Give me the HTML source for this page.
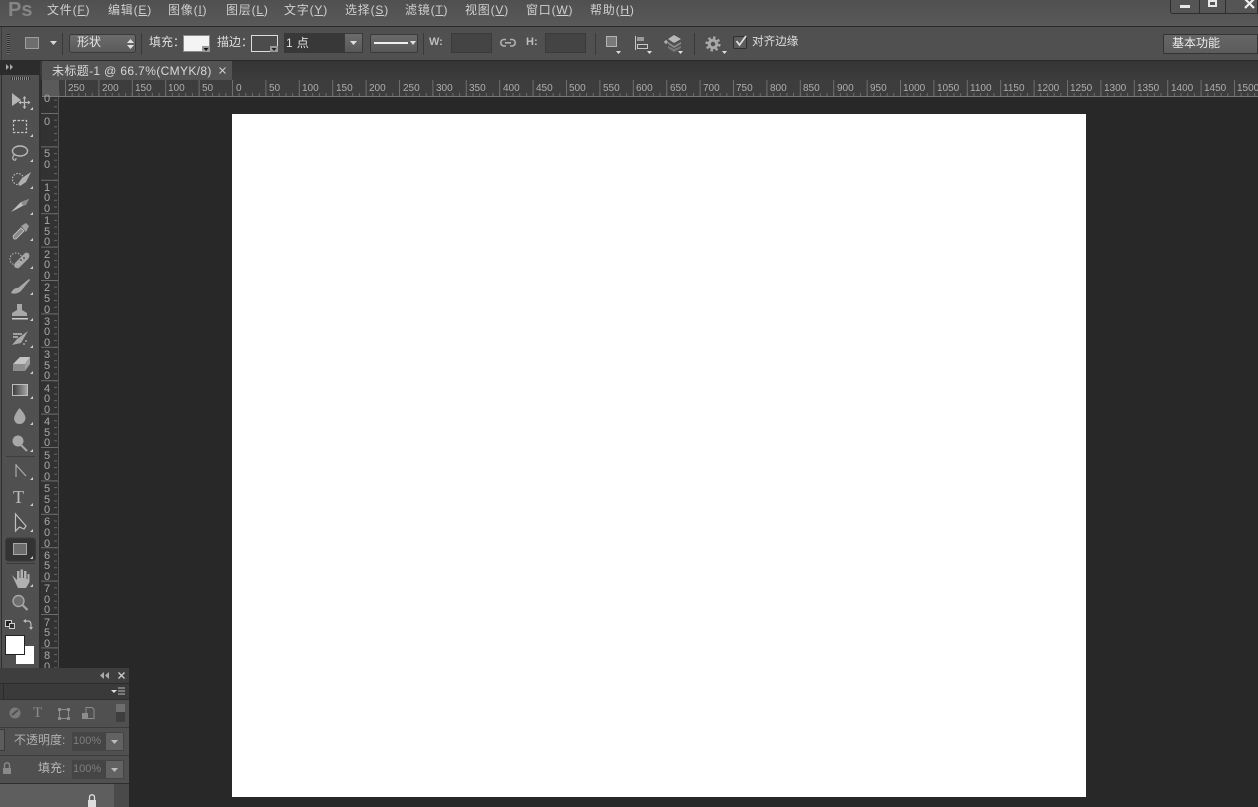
<!DOCTYPE html>
<html><head><meta charset="utf-8"><style>
html,body{margin:0;padding:0;width:1258px;height:807px;overflow:hidden;background:#282828}
body{position:relative;font-family:"Liberation Sans","Noto Sans CJK SC",sans-serif;font-size:12px;color:#d6d6d6}
.a{position:absolute}
.m{position:absolute;top:2px;line-height:16px;font-size:12px;color:#cfcfcf;white-space:nowrap;letter-spacing:.8px}
.m u{text-underline-offset:1px}
.t{position:absolute;white-space:nowrap;line-height:16px}
svg{position:absolute;overflow:visible}
</style></head><body>
<!-- menu bar -->
<div class="a" style="left:0;top:0;width:1258px;height:26px;background:linear-gradient(#505050,#595959)"></div>
<div class="a" style="left:0;top:26px;width:1258px;height:1px;background:#2b2b2b"></div>
<div class="t" style="left:8px;top:0;font-size:20px;line-height:20px;font-weight:bold;color:#858585">Ps</div>
<div class="m" style="left:47px">文件(<u>F</u>)</div>
<div class="m" style="left:108px">编辑(<u>E</u>)</div>
<div class="m" style="left:168px">图像(<u>I</u>)</div>
<div class="m" style="left:226px">图层(<u>L</u>)</div>
<div class="m" style="left:284px">文字(<u>Y</u>)</div>
<div class="m" style="left:345px">选择(<u>S</u>)</div>
<div class="m" style="left:405px">滤镜(<u>T</u>)</div>
<div class="m" style="left:465px">视图(<u>V</u>)</div>
<div class="m" style="left:526px">窗口(<u>W</u>)</div>
<div class="m" style="left:590px">帮助(<u>H</u>)</div>
<!-- window controls -->
<div class="a" style="left:1170px;top:-1px;width:88px;height:15px;background:#555;border:1px solid #2e2e2e;border-radius:0 0 0 3px;box-sizing:border-box"></div>
<div class="a" style="left:1199px;top:0;width:1px;height:13px;background:#2e2e2e"></div>
<div class="a" style="left:1225px;top:0;width:1px;height:13px;background:#2e2e2e"></div>
<div class="a" style="left:1180px;top:5px;width:10px;height:3px;background:#e8e8e8"></div>
<div class="a" style="left:1208px;top:0;width:9px;height:7px;border:2px solid #e8e8e8;box-sizing:border-box"></div>
<svg style="left:1244px;top:0" width="14" height="10"><path d="M1 -1L10 8M10 -1L1 8" stroke="#eee" stroke-width="2.2" fill="none"/></svg>
<!-- options bar -->
<div class="a" style="left:0;top:27px;width:1258px;height:33px;background:#505050"></div>
<div class="a" style="left:0;top:60px;width:1258px;height:1px;background:#2a2a2a"></div>
<div class="a" style="left:1px;top:27px;width:1px;height:33px;background:#3c3c3c"></div>
<div class="a" style="left:7px;top:34px;width:3px;height:20px;background:repeating-linear-gradient(#2f2f2f 0 1px,#6a6a6a 1px 2px)"></div>
<div class="a" style="left:25px;top:37px;width:12px;height:10px;background:#6e6e6e;border:1px solid #9e9e9e"></div>
<svg style="left:50px;top:41px" width="7" height="4"><path d="M0 0H7L3.500 4Z" fill="#d8d8d8"/></svg>
<div class="a" style="left:62px;top:33px;width:1px;height:22px;background:#3a3a3a"></div>
<div class="a" style="left:69px;top:34px;width:67px;height:19px;background:linear-gradient(#6c6c6c,#5a5a5a);border:1px solid #3a3a3a;border-radius:3px;box-sizing:border-box"></div>
<div class="t" style="left:77px;top:34px;color:#e4e4e4">形状</div>
<svg style="left:127px;top:39px" width="7" height="10"><path d="M0 4L3.500 0L7 4ZM0 6L3.500 10L7 6Z" fill="#e0e0e0"/></svg>
<div class="a" style="left:141px;top:33px;width:1px;height:22px;background:#3a3a3a"></div>
<div class="t" style="left:149px;top:34px;color:#dedede">填充：</div>
<div class="a" style="left:183px;top:35px;width:27px;height:17px;background:#f4f4f4;border:1px solid #8c8c8c;box-sizing:border-box"></div>
<svg style="left:202px;top:46px" width="8" height="6"><path d="M0 0H8V6H0Z" fill="#999"/><path d="M1.500 2H6.500L4 5Z" fill="#111"/></svg>
<div class="t" style="left:217px;top:34px;color:#dedede">描边：</div>
<div class="a" style="left:251px;top:35px;width:27px;height:17px;background:#4c4c4c;border:1px solid #dcdcdc;box-sizing:border-box"></div>
<svg style="left:270px;top:46px" width="8" height="6"><path d="M0 0H8V6H0Z" fill="#9a9a9a"/><path d="M1.500 2H6.500L4 5Z" fill="#222"/></svg>
<div class="a" style="left:284px;top:33px;width:60px;height:20px;background:#383838"></div>
<div class="t" style="left:286px;top:35px;color:#e0e0e0;letter-spacing:.4px">1 点</div>
<div class="a" style="left:344px;top:33px;width:19px;height:20px;background:linear-gradient(#6c6c6c,#585858);border:1px solid #3a3a3a;box-sizing:border-box"></div>
<svg style="left:350px;top:41px" width="7" height="4"><path d="M0 0H7L3.500 4Z" fill="#e0e0e0"/></svg>
<div class="a" style="left:370px;top:34px;width:48px;height:19px;background:linear-gradient(#6a6a6a,#585858);border:1px solid #3a3a3a;border-radius:2px;box-sizing:border-box"></div>
<div class="a" style="left:374px;top:42px;width:34px;height:2px;background:#f0f0f0"></div>
<svg style="left:410px;top:41px" width="6" height="4"><path d="M0 0H6L3 4Z" fill="#e0e0e0"/></svg>
<div class="a" style="left:423px;top:33px;width:1px;height:22px;background:#3a3a3a"></div>
<div class="t" style="left:429px;top:34px;font-size:11px;font-weight:bold;color:#bdbdbd">W:</div>
<div class="a" style="left:451px;top:33px;width:41px;height:20px;background:#444;border:1px solid #3a3a3a;box-sizing:border-box"></div>
<svg style="left:500px;top:38px" width="16" height="10"><path d="M6 1.500H4A3.200 3.200 0 0 0 4 8H6M10 1.500H12A3.200 3.200 0 0 1 12 8H10M5 4.800H11" stroke="#b0b0b0" stroke-width="1.600" fill="none"/></svg>
<div class="t" style="left:526px;top:34px;font-size:11px;font-weight:bold;color:#bdbdbd">H:</div>
<div class="a" style="left:545px;top:33px;width:41px;height:20px;background:#444;border:1px solid #3a3a3a;box-sizing:border-box"></div>
<div class="a" style="left:595px;top:33px;width:1px;height:22px;background:#3a3a3a"></div>
<div class="a" style="left:606px;top:36px;width:9px;height:9px;background:#7a7a7a;border:1px solid #b4b4b4"></div>
<svg style="left:616px;top:51px" width="5" height="3"><path d="M0 0H5L2.500 3Z" fill="#ddd"/></svg>
<svg style="left:635px;top:36px" width="16" height="14"><path d="M.5 0V14" stroke="#c8c8c8"/><rect x="2" y="1" width="7" height="4" fill="#9a9a9a"/><rect x="2.500" y="8.500" width="10" height="4" fill="none" stroke="#c8c8c8"/></svg>
<svg style="left:647px;top:51px" width="5" height="3"><path d="M0 0H5L2.500 3Z" fill="#ddd"/></svg>
<svg style="left:663px;top:35px" width="20" height="17"><path d="M1 7H5M3 5V9" stroke="#ccc"/><path d="M11 0L18 4L11 8L5 4Z" fill="#b8b8b8"/><path d="M5 7L11 11L18 7V9L11 13L5 9Z" fill="#8c8c8c"/><path d="M5 11L11 14L18 11V13L11 17L5 13Z" fill="#777"/></svg>
<svg style="left:678px;top:51px" width="5" height="3"><path d="M0 0H5L2.500 3Z" fill="#ddd"/></svg>
<div class="a" style="left:694px;top:33px;width:1px;height:22px;background:#3a3a3a"></div>
<svg style="left:705px;top:36px" width="16" height="16" viewBox="0 0 16 16"><circle cx="8" cy="8" r="3.800" fill="none" stroke="#a8a8a8" stroke-width="3"/><circle cx="8" cy="8" r="6.400" fill="none" stroke="#a8a8a8" stroke-width="2.400" stroke-dasharray="2.500 2.500"/></svg>
<svg style="left:722px;top:51px" width="5" height="3"><path d="M0 0H5L2.500 3Z" fill="#ddd"/></svg>
<div class="a" style="left:733px;top:36px;width:14px;height:13px;background:#5c5c5c;border:1px solid #2f2f2f;border-radius:2px;box-sizing:border-box"></div>
<svg style="left:735px;top:35px" width="13" height="12"><path d="M1.500 6L4.500 10L11 1" stroke="#e2e2e2" stroke-width="1.700" fill="none"/></svg>
<div class="t" style="left:752px;top:34px;color:#dedede;font-size:11.600px">对齐边缘</div>
<div class="a" style="left:1163px;top:34px;width:95px;height:20px;background:linear-gradient(#666,#5c5c5c);border:1px solid #333;border-radius:2px 0 0 2px;box-sizing:border-box"></div>
<div class="t" style="left:1172px;top:35px;color:#ececec">基本功能</div>
<!-- tab row -->
<div class="a" style="left:0;top:61px;width:1258px;height:19px;background:linear-gradient(#353535,#3c3c3c)"></div>
<div class="a" style="left:42px;top:61px;width:190px;height:19px;background:#535353"></div>
<div class="t" style="left:52px;top:63px;color:#d8d8d8;letter-spacing:.36px">未标题-1 @ 66.7%(CMYK/8)</div>
<svg style="left:219px;top:67px" width="7" height="7"><path d="M.5 .5L6.500 6.500M6.500 .5L.5 6.500" stroke="#ccc" stroke-width="1.100"/></svg>
<!-- canvas area -->
<div class="a" style="left:59px;top:97px;width:1199px;height:710px;background:#282828"></div>
<div class="a" style="left:232px;top:114px;width:854px;height:683px;background:#fff"></div>
<!-- h ruler -->
<svg style="left:42px;top:80px" width="1216" height="17">
<defs><pattern id="hp" width="6.680" height="17" patternUnits="userSpaceOnUse" x="190"><rect x="0" y="13" width="1" height="3" fill="#6c6c6c"/></pattern>
<pattern id="hb" width="33.400" height="17" patternUnits="userSpaceOnUse" x="190"><rect x="0" y="0" width="1" height="16" fill="#6e6e6e"/></pattern></defs>
<rect width="1216" height="17" fill="#3d3d3d"/>
<rect x="17" width="1199" height="16" fill="url(#hp)"/><rect x="17" width="1199" height="16" fill="url(#hb)"/>
<rect x="0" width="17" height="17" fill="#5a5a5a"/>
<rect y="16" width="1216" height="1" fill="#767676"/>
<g font-family="Liberation Sans,sans-serif" font-size="10" fill="#aeaeae">
<text x="26" y="11">250</text><text x="60" y="11">200</text><text x="93" y="11">150</text><text x="126" y="11">100</text><text x="160" y="11">50</text><text x="194" y="11">0</text><text x="227" y="11">50</text><text x="260" y="11">100</text><text x="294" y="11">150</text><text x="327" y="11">200</text><text x="361" y="11">250</text><text x="394" y="11">300</text><text x="427" y="11">350</text><text x="461" y="11">400</text><text x="494" y="11">450</text><text x="527" y="11">500</text><text x="561" y="11">550</text><text x="594" y="11">600</text><text x="628" y="11">650</text><text x="661" y="11">700</text><text x="694" y="11">750</text><text x="728" y="11">800</text><text x="761" y="11">850</text><text x="795" y="11">900</text><text x="828" y="11">950</text><text x="861" y="11">1000</text><text x="895" y="11">1050</text><text x="928" y="11">1100</text><text x="961" y="11">1150</text><text x="995" y="11">1200</text><text x="1028" y="11">1250</text><text x="1062" y="11">1300</text><text x="1095" y="11">1350</text><text x="1129" y="11">1400</text><text x="1162" y="11">1450</text><text x="1195" y="11">1500</text>
</g></svg>
<!-- v ruler -->
<svg style="left:41px;top:97px" width="18" height="573">
<defs><pattern id="vp" width="18" height="6.680" patternUnits="userSpaceOnUse" y="16"><rect x="13" y="0" width="3" height="1" fill="#666"/></pattern>
<pattern id="vb" width="18" height="33.400" patternUnits="userSpaceOnUse" y="16"><rect x="0" y="0" width="17" height="1" fill="#6c6c6c"/></pattern></defs>
<rect width="18" height="573" fill="#323232"/>
<rect width="17" height="573" fill="url(#vp)"/><rect width="17" height="573" fill="url(#vb)"/>
<rect x="17" width="1" height="573" fill="#555"/>
<g font-family="Liberation Sans,sans-serif" font-size="11" fill="#aaa">
<text x="3" y="5">0</text>
<text x="3" y="28">0</text>
<text x="3" y="60">5</text><text x="3" y="71">0</text>
<text x="3" y="94">1</text><text x="3" y="104">0</text><text x="3" y="115">0</text>
<text x="3" y="127">1</text><text x="3" y="138">5</text><text x="3" y="148">0</text>
<text x="3" y="161">2</text><text x="3" y="171">0</text><text x="3" y="182">0</text>
<text x="3" y="194">2</text><text x="3" y="205">5</text><text x="3" y="216">0</text>
<text x="3" y="228">3</text><text x="3" y="238">0</text><text x="3" y="249">0</text>
<text x="3" y="261">3</text><text x="3" y="272">5</text><text x="3" y="282">0</text>
<text x="3" y="295">4</text><text x="3" y="305">0</text><text x="3" y="316">0</text>
<text x="3" y="328">4</text><text x="3" y="339">5</text><text x="3" y="349">0</text>
<text x="3" y="362">5</text><text x="3" y="372">0</text><text x="3" y="383">0</text>
<text x="3" y="395">5</text><text x="3" y="406">5</text><text x="3" y="416">0</text>
<text x="3" y="428">6</text><text x="3" y="439">0</text><text x="3" y="450">0</text>
<text x="3" y="462">6</text><text x="3" y="472">5</text><text x="3" y="483">0</text>
<text x="3" y="495">7</text><text x="3" y="506">0</text><text x="3" y="516">0</text>
<text x="3" y="529">7</text><text x="3" y="539">5</text><text x="3" y="550">0</text>
<text x="3" y="562">8</text><text x="3" y="573">0</text>
</g></svg>
<!-- toolbar -->
<div class="a" style="left:0;top:61px;width:40px;height:14px;background:#2c2c2c"></div>
<svg style="left:6px;top:64px" width="8" height="6"><path d="M0 0L3 3L0 6ZM4 0L7 3L4 6Z" fill="#aaa"/></svg>
<div class="a" style="left:0;top:75px;width:41px;height:595px;background:#505050"></div>
<div class="a" style="left:1px;top:75px;width:1px;height:595px;background:#2f2f2f"></div>
<div class="a" style="left:39px;top:75px;width:2px;height:595px;background:#2f2f2f"></div>
<div class="a" style="left:11px;top:77px;width:19px;height:3px;background:repeating-linear-gradient(90deg,#2e2e2e 0 1px,#8a8a8a 1px 2px)"></div>
<svg style="left:0;top:0" width="41" height="670">
<defs><linearGradient id="gr" x1="0" x2="1"><stop offset="0" stop-color="#3c3c3c"/><stop offset="1" stop-color="#a6a6a6"/></linearGradient></defs>
<g fill="#a8a8a8" stroke="none">
<!-- move -->
<path d="M12 93L21 100L12 106Z" fill="#b4b4b4"/><path d="M24.500 98V107M20 102.500H29" stroke="#bcbcbc" stroke-width="1.300"/><path d="M24.500 96L26.500 98.500H22.500ZM24.500 109L26.500 106.500H22.500ZM18.500 102.500L21 100.500V104.500ZM30.500 102.500L28 100.500V104.500Z" fill="#bcbcbc"/>
<!-- marquee -->
<rect x="13.500" y="120.500" width="13" height="12" fill="none" stroke="#c4c4c4" stroke-width="1.200" stroke-dasharray="2.500 1.500"/>
<!-- lasso -->
<ellipse cx="20" cy="151" rx="7.500" ry="5" fill="none" stroke="#b8b8b8" stroke-width="1.400"/><path d="M15 154Q11 158 14 160Q16 161 16 158" fill="none" stroke="#b8b8b8" stroke-width="1.200"/>
<!-- quick selection -->
<circle cx="18" cy="179" r="5.500" fill="none" stroke="#ccc" stroke-dasharray="1.500 1.500"/><path d="M18 184L22 178L31 172L26 182L20 186Z" fill="#b0b0b0"/>
<!-- knife -->
<path d="M11 212L21 202L29 199L26 204L17 209Z" fill="#c0c0c0"/><path d="M21 202L29 199L26 205L23 206Z" fill="#8c8c8c"/>
<!-- eyedropper -->
<path d="M14 239L13 236L21 228L24 231L16 239Z" fill="#8a8a8a" stroke="#c8c8c8" stroke-width=".8"/><path d="M21 226L26 223L29 226L26 232Z" fill="#a0a0a0"/>
<!-- bandage -->
<path d="M15 263L25 253Q28 252 29 254Q30 257 28 259L19 268Q16 269 14 266Z" fill="#a6a6a6"/><circle cx="16" cy="259" r="6" fill="none" stroke="#bbb" stroke-dasharray="1.500 1.500"/><circle cx="21" cy="260" r="1" fill="#555"/><circle cx="24" cy="258" r="1" fill="#555"/>
<!-- brush -->
<path d="M11 293Q14 287 18 288L29 279L30 280L21 291Q16 295 11 293Z"/>
<!-- stamp -->
<path d="M17 304H22V310L27 313V316H12V313L17 310Z"/><rect x="12" y="318" width="16" height="1.500" fill="#ccc"/>
<!-- history brush -->
<path d="M12 345L17 339L28 331L21 343Z"/><path d="M13 334H22M13 337H18" stroke="#bbb" stroke-width="1.500"/><path d="M24 343V345M26 340V342" stroke="#ccc"/>
<!-- eraser -->
<path d="M13 364L20 357H30L25 364Z" fill="#c4c4c4"/><path d="M13 364H25V371H13Z" fill="#8c8c8c"/><path d="M25 364L30 357V364L25 371Z" fill="#a0a0a0"/>
<!-- gradient -->
<rect x="12.500" y="384.500" width="15" height="11" fill="url(#gr)" stroke="#bdbdbd"/>
<!-- drop -->
<path d="M19.500 408Q26 415 25.500 419Q24 424 19.500 424Q15 424 14 419Q14 415 19.500 408Z"/>
<!-- dodge -->
<circle cx="18" cy="441" r="5.500"/><path d="M21 445L27 451" stroke="#a8a8a8" stroke-width="2"/>
<path d="M6 456.500H35" stroke="#3d3d3d"/>
<!-- pen -->
<path d="M16 464V477M16 465L26 476" stroke="#aaa" stroke-width="1.200" fill="none"/>
<!-- path select -->
<path d="M15.500 514V531L19.500 527L24 529L26 526Z" fill="#4a4a4a" stroke="#c0c0c0" stroke-width="1.200"/>
<!-- rect active -->
<rect x="5.500" y="538" width="30" height="23" rx="3" fill="#333" stroke="#3b3b3b"/>
<rect x="13.500" y="543.500" width="13" height="11" fill="#6c6c6c" stroke="#a8a8a8"/>
<path d="M6 563.500H35" stroke="#3a3a3a"/>
<!-- hand -->
<path d="M12 575L17 580V571H19.500V578H20.500V569.500H23V578H24V571H26.500V579H27.500V574H29.500V582L26 588H18Z" fill="#b0b0b0"/>
<!-- zoom -->
<circle cx="18.500" cy="601" r="5.500" fill="#6e6e6e" stroke="#a6a6a6" stroke-width="1.400"/><path d="M22.500 605L27.500 610" stroke="#a6a6a6" stroke-width="2.200"/>
<!-- small colours -->
<rect x="5.500" y="620.500" width="6" height="6" fill="#222" stroke="#ccc"/><rect x="9.500" y="623.500" width="5" height="5" fill="#333" stroke="#ccc"/>
<path d="M24 621H28Q31 621 31 625V628" stroke="#bbb" fill="none" stroke-width="1.200"/><path d="M23 621L26 619V623ZM31 630L29 627H33Z" fill="#bbb"/>
<!-- small corner triangles -->
<g fill="#ccc"><path d="M33 107V110H30Z"/><path d="M33 134V137H30Z"/><path d="M33 159V162H30Z"/><path d="M33 186V189H30Z"/><path d="M33 212V215H30Z"/><path d="M33 238V241H30Z"/><path d="M33 266V269H30Z"/><path d="M33 292V295H30Z"/><path d="M33 318V321H30Z"/><path d="M33 345V348H30Z"/><path d="M33 371V374H30Z"/><path d="M33 396V399H30Z"/><path d="M33 422V425H30Z"/><path d="M33 449V452H30Z"/><path d="M33 477V480H30Z"/><path d="M33 503V506H30Z"/><path d="M33 529V532H30Z"/><path d="M33 556V559H30Z"/><path d="M33 584V587H30Z"/></g>
</g></svg>
<div class="t" style="left:13px;top:488px;font-family:'Liberation Serif',serif;font-size:18px;line-height:18px;color:#bcbcbc">T</div>
<div class="a" style="left:16px;top:646px;width:18px;height:18px;background:#fff"></div>
<div class="a" style="left:5px;top:635px;width:18px;height:18px;background:#fff;border:1px solid #222;box-sizing:content-box"></div>
<!-- bottom-left panel -->
<div class="a" style="left:0;top:668px;width:129px;height:139px;background:#505050"></div>
<div class="a" style="left:0;top:668px;width:129px;height:15px;background:#3e3e3e"></div>
<div class="a" style="left:0;top:683px;width:129px;height:16px;background:#3a3a3a;border-top:1px solid #2b2b2b;box-sizing:border-box"></div>
<div class="a" style="left:0;top:699px;width:129px;height:1px;background:#2e2e2e"></div>
<div class="a" style="left:3px;top:683px;width:1px;height:16px;background:#2b2b2b"></div>
<svg style="left:100px;top:672px" width="26" height="8"><path d="M4 0V7L0 3.500ZM9 0V7L5 3.500Z" fill="#aaa"/><path d="M18.500 .5L24.500 6.500M24.500 .5L18.500 6.500" stroke="#ccc" stroke-width="1.300"/></svg>
<svg style="left:111px;top:687px" width="15" height="9"><path d="M0 3H6L3 6Z" fill="#ddd"/><path d="M7 1H14M7 4H14M7 7H14" stroke="#bbb"/></svg>
<svg style="left:0;top:700px" width="129" height="28">
<circle cx="15" cy="13" r="5.500" fill="#7a7a7a"/><path d="M12 15L18 10" stroke="#505050" stroke-width="2"/>
<rect x="59.500" y="9.500" width="9" height="9" fill="none" stroke="#8c8c8c"/><g fill="#8c8c8c"><rect x="58" y="8" width="3" height="3"/><rect x="67" y="8" width="3" height="3"/><rect x="58" y="17" width="3" height="3"/><rect x="67" y="17" width="3" height="3"/></g>
<path d="M86 7.500H92L94 9.500V18.500H86Z" fill="none" stroke="#8c8c8c"/><rect x="82" y="13" width="6" height="6" fill="#8c8c8c"/>
<rect x="116" y="4" width="9" height="18" fill="#3e3e3e"/><rect x="116" y="4" width="9" height="8" fill="#6e6e6e"/>
</svg>
<div class="t" style="left:33px;top:705px;font-family:'Liberation Serif',serif;font-size:15px;color:#8c8c8c">T</div>
<div class="a" style="left:0;top:727px;width:129px;height:1px;background:#3c3c3c"></div>
<div class="a" style="left:0;top:729px;width:5px;height:22px;background:#5c5c5c;border:1px solid #3a3a3a;box-sizing:border-box;border-left:0"></div>
<div class="t" style="left:14px;top:732px;color:#b0b0b0">不透明度:</div>
<div class="a" style="left:72px;top:732px;width:33px;height:19px;background:#454545"></div>
<div class="t" style="left:73px;top:733px;color:#7e7e7e;font-size:11px">100%</div>
<div class="a" style="left:105px;top:732px;width:19px;height:19px;background:#626262;border:1px solid #444;box-sizing:border-box"></div>
<svg style="left:111px;top:740px" width="7" height="4"><path d="M0 0H7L3.500 4Z" fill="#bbb"/></svg>
<div class="a" style="left:0;top:755px;width:129px;height:1px;background:#3c3c3c"></div>
<svg style="left:2px;top:762px" width="10" height="13"><path d="M2.500 6V3.500Q2.500 .8 5 .8Q7.500 .8 7.500 3.500V6" stroke="#8a8a8a" fill="none" stroke-width="1.300"/><rect x="1" y="6" width="8" height="6" fill="#8a8a8a"/></svg>
<div class="t" style="left:38px;top:760px;color:#b8b8b8">填充:</div>
<div class="a" style="left:72px;top:760px;width:33px;height:19px;background:#454545"></div>
<div class="t" style="left:73px;top:761px;color:#7e7e7e;font-size:11px">100%</div>
<div class="a" style="left:105px;top:760px;width:19px;height:19px;background:#626262;border:1px solid #444;box-sizing:border-box"></div>
<svg style="left:111px;top:768px" width="7" height="4"><path d="M0 0H7L3.500 4Z" fill="#bbb"/></svg>
<div class="a" style="left:0;top:783px;width:129px;height:1px;background:#2e2e2e"></div>
<div class="a" style="left:0;top:784px;width:114px;height:23px;background:#5e5e5e"></div>
<div class="a" style="left:114px;top:784px;width:15px;height:23px;background:#4a4a4a"></div>
<svg style="left:87px;top:794px" width="10" height="13"><path d="M2.500 6V3.500Q2.500 .8 5 .8Q7.500 .8 7.500 3.500V6" stroke="#ddd" fill="none" stroke-width="1.300"/><rect x="1" y="6" width="8" height="7" fill="#ddd"/></svg>
</body></html>
